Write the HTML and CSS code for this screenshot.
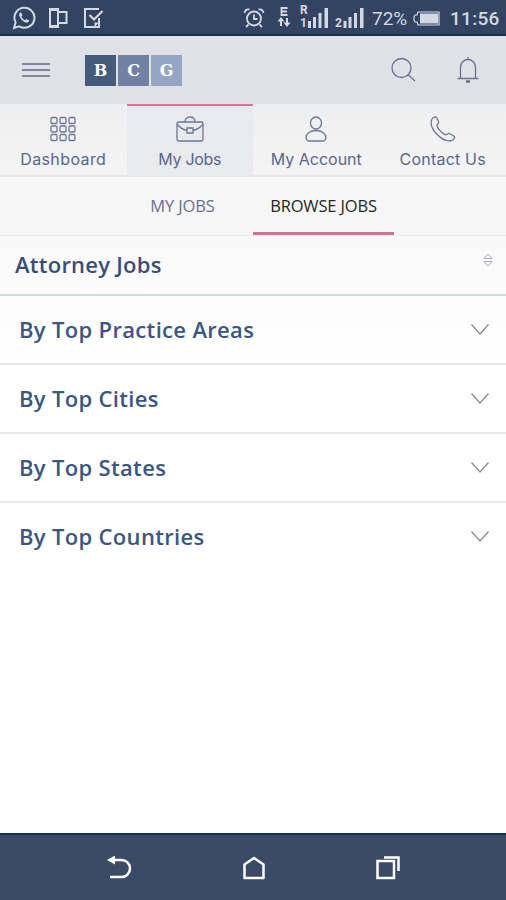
FILE: index.html
```html
<!DOCTYPE html>
<html lang="en">
<head>
  <meta charset="UTF-8">
  <meta name="viewport" content="width=device-width, initial-scale=1.0">
  <title>BCG - Browse Jobs</title>
  <link rel="stylesheet" href="styles.css">
</head>
<body>

<div class="statusbar">
  <div class="status-left">
    <svg class="whatsapp" width="24" height="24" viewBox="0 0 24 24">
      <path d="M2 22l1.600-5.600A10 10 0 1 1 7.300 20.300z" fill="none" stroke="currentColor" stroke-width="2"/>
      <path d="M8.200 6.500c-1.300 1-1.300 2.600-.2 4.700 1.500 2.900 3.700 4.800 6.100 5.400 1.500.3 2.900-.8 3-2.200l-2.700-1.500-1.300 1.300c-1.800-.7-3-2-3.700-3.500l1-1.300-1-2.700z" fill="currentColor"/>
    </svg>
    <svg class="phones" width="21" height="22" viewBox="0 0 21 22">
      <path d="M2 2h8v18H2zM10 5h8.500v11H10" fill="none" stroke="currentColor" stroke-width="2"/>
      <path d="M2 3h8M2 19h8" stroke="currentColor" stroke-width="2"/>
    </svg>
    <svg class="note" width="21" height="22" viewBox="0 0 21 22">
      <path d="M16 11v9H2V2h14" fill="none" stroke="currentColor" stroke-width="2"/>
      <path d="M6.500 8l4.500 4.500L19.500 4" fill="none" stroke="currentColor" stroke-width="2.200"/>
      <path d="M11.500 20v-4.500H16z" fill="currentColor"/>
    </svg>
  </div>
  <div class="status-right">
    <svg class="alarm" width="22" height="22" viewBox="0 0 22 22">
      <g fill="none" stroke="currentColor" stroke-width="1.800">
        <circle cx="11" cy="11.500" r="7"/>
        <path d="M11 7.500V12h3.500M5.500 17.500L3 20M16.500 17.500L19 20M1.500 6C2 3.500 4 2 6.500 2.500M20.500 6C20 3.500 18 2 15.500 2.500"/>
      </g>
    </svg>
    <svg class="edge" width="14" height="24" viewBox="0 0 14 24">
      <path d="M10.500 3H4.500v7h6M4.500 6.500H10" fill="none" stroke="currentColor" stroke-width="1.800"/>
      <path d="M4 21v-6M10 13v6" stroke="currentColor" stroke-width="2"/>
      <path d="M4 12L.5 16.500h7zM10 22l-3.500-4.500h7z" fill="currentColor"/>
    </svg>
    <svg class="signal" width="31" height="30" viewBox="0 0 31 30">
      <text x="1" y="13" class="sim">R</text>
      <text x="1" y="26" class="sim">1</text>
      <path d="M9 20h3v7H9zM14 16h3v11h-3zM19.500 12h3v15h-3zM25.500 7h3.500v20h-3.500z" fill="currentColor"/>
    </svg>
    <svg class="signal second" width="31" height="30" viewBox="0 0 31 30">
      <text x="1" y="26" class="sim">2</text>
      <path d="M9.500 20h3v7h-3zM14.500 16h3v11h-3zM20 12h3v15h-3zM26 7h3.500v20H26z" fill="currentColor"/>
    </svg>
    <span class="percent">72%</span>
    <svg class="battery" width="27" height="15" viewBox="0 0 27 15">
      <path d="M5 1h21v13H5l-1-3H2L1 9V6l1-2h2z" fill="none" stroke="currentColor" stroke-width="1.200"/>
      <path d="M7 2.500h18v10H7z" fill="currentColor"/>
    </svg>
    <span class="clock">11:56</span>
  </div>
</div>

<header>
  <div class="brand">
    <div class="menu"><span></span><span></span><span></span></div>
    <div class="logo"><span>B</span><span>C</span><span>G</span></div>
  </div>
  <div class="actions">
    <svg width="26" height="26" viewBox="0 0 26 26">
      <circle cx="10.500" cy="11" r="9.500" /><path d="M17 17.500L24 24"/>
    </svg>
    <svg width="24" height="28" viewBox="0 0 24 28">
      <path d="M4.500 22V11a7.500 7.500 0 0 1 15 0v11M1.500 22.500h21M12 1v3"/>
      <path d="M10 25.500h4" class="clapper"/>
    </svg>
  </div>
</header>

<nav class="tabs">
  <a class="tab">
    <svg width="26" height="26" viewBox="0 0 26 26">
      <rect x="1" y="1.500" width="6" height="6" rx="1.200"/><rect x="10" y="1.500" width="6" height="6" rx="1.200"/><rect x="19" y="1.500" width="6" height="6" rx="1.200"/>
      <rect x="1" y="10" width="6" height="6" rx="1.200"/><rect x="10" y="10" width="6" height="6" rx="1.200"/><rect x="19" y="10" width="6" height="6" rx="1.200"/>
      <rect x="1" y="18.500" width="6" height="6" rx="1.200"/><rect x="10" y="18.500" width="6" height="6" rx="1.200"/><rect x="19" y="18.500" width="6" height="6" rx="1.200"/>
    </svg>
    <span class="dashboard">Dashboard</span>
  </a>
  <a class="tab active">
    <svg width="28" height="26" viewBox="0 0 28 26">
      <rect x="1" y="6" width="26" height="19" rx="1.500"/>
      <path d="M9 6c0-3 1.500-5 5-5s5 2 5 5M1 8c3 4 6 5.500 10 6.500M27 8c-3 4-6 5.500-10 6.500M11 12h6v5h-6z"/>
    </svg>
    <span class="jobs">My Jobs</span>
  </a>
  <a class="tab">
    <svg width="22" height="26" viewBox="0 0 22 26">
      <ellipse cx="11" cy="7" rx="5.500" ry="6"/>
      <path d="M11 14.500c-6 0-10 3.500-10 7C1 24 3 25 5 25h12c2 0 4-1 4-3.500 0-3.500-4-7-10-7z"/>
    </svg>
    <span>My Account</span>
  </a>
  <a class="tab">
    <svg width="26" height="26" viewBox="0 0 26 26">
      <path d="M2 3c1-1.800 3.800-2.800 4.800-1.200L8.500 5.500C9.300 8 6.500 8 7 10c1.500 3.500 5 7 8.500 8.800 1.800.5 2-2 4-1.300l4.300 2.500c1.700 1.200.2 3.800-2 4.500C12 27-2 12 2 3z"/>
    </svg>
    <span class="contact">Contact Us</span>
  </a>
</nav>

<nav class="subtabs">
  <a>MY JOBS</a>
  <a class="active">BROWSE JOBS</a>
</nav>

<main>
  <div class="title">
    <h1>Attorney Jobs</h1>
    <svg width="10" height="14" viewBox="0 0 10 14"><path d="M1 5.500L5 1l4 4.500zM1 8.500L5 13l4-4.500z"/></svg>
  </div>
  <ul class="list">
    <li><span>By Top Practice Areas</span><svg width="18" height="11" viewBox="0 0 18 11"><path d="M.5.5L9 10 17.500.5"/></svg></li>
    <li><span>By Top Cities</span><svg width="18" height="11" viewBox="0 0 18 11"><path d="M.5.5L9 10 17.500.5"/></svg></li>
    <li><span>By Top States</span><svg width="18" height="11" viewBox="0 0 18 11"><path d="M.5.5L9 10 17.500.5"/></svg></li>
    <li><span>By Top Countries</span><svg width="18" height="11" viewBox="0 0 18 11"><path d="M.5.5L9 10 17.500.5"/></svg></li>
  </ul>
</main>

<footer>
  <svg width="26" height="24" viewBox="0 0 26 24">
    <path d="M5 4h10.500a8.500 8.500 0 0 1 0 17H4" fill="none" stroke="#fff" stroke-width="2.500"/>
    <path d="M1 4l8-4.500v9z" fill="#fff"/>
  </svg>
  <svg width="22" height="24" viewBox="0 0 22 24">
    <path d="M1.500 8.500L11 2l9.500 6.500V22h-19z" fill="none" stroke="#fff" stroke-width="2.500" stroke-linejoin="round"/>
  </svg>
  <svg width="24" height="24" viewBox="0 0 24 24">
    <path d="M1.500 5H18v17H1.500zM8 1.500h14.500V15" fill="none" stroke="#fff" stroke-width="2.500"/>
  </svg>
</footer>

</body>
</html>
```
FILE: styles.css
```css
* {
  box-sizing: border-box;
}
body {
  font-family: "Open Sans", "Noto Sans", sans-serif;
  background: #fff;
  color: #3a4d78;
  margin: 0;
  min-height: 900px;
  display: flex;
  flex-direction: column;
}
svg {
  display: block;
  flex-shrink: 0;
}

/* status bar */
.statusbar {
  height: 36px;
  background: #334463;
  border-bottom: 2px solid #172c50;
  color: #d3d9e4;
  display: flex;
  justify-content: space-between;
  padding: 0 7px 0 12px;
  font-family: Roboto, sans-serif;
}
.status-left, .status-right {
  display: flex;
  align-items: center;
}
.status-left {
  padding-top: 2px;
}
.phones {
  margin-left: 12px;
}
.note {
  margin-left: 14px;
}
.alarm {
  margin-top: 2px;
}
.edge {
  margin-left: 12px;
}
.signal {
  margin: -3px 0 0 8px;
}
.signal.second {
  margin-left: 4px;
}
.sim {
  font: bold 12px Roboto, sans-serif;
  fill: currentColor;
}
.percent {
  font-size: 19px;
  width: 37px;
  margin: 3px 0 0 7px;
}
.battery {
  margin: 2px 0 0 4px;
}
.clock {
  font-size: 19px;
  font-weight: 500;
  letter-spacing: 0.3px;
  width: 49px;
  margin: 3px 0 0 10px;
}

/* header */
header {
  height: 68px;
  background: #dfe1e6;
  display: flex;
  justify-content: space-between;
  align-items: center;
  padding: 0 26px 0 22px;
}
.brand, .actions {
  display: flex;
  align-items: center;
}
.brand {
  gap: 35px;
}
.menu {
  width: 28px;
  display: flex;
  flex-direction: column;
  gap: 4px;
}
.menu span {
  height: 2px;
  background: #85859d;
}
.logo {
  display: flex;
  gap: 2px;
}
.logo span {
  width: 31px;
  height: 31px;
  line-height: 32px;
  background: #445b7c;
  color: #fff;
  font-family: "DejaVu Serif", serif;
  font-size: 16px;
  font-weight: bold;
  text-align: center;
}
.logo span:nth-child(2) {
  background: #7181a3;
}
.logo span:nth-child(3) {
  background: #95a5c4;
}
.actions {
  gap: 39px;
}
.actions svg {
  fill: none;
  stroke: #6c6f91;
  stroke-width: 1.3;
}
.actions .clapper {
  stroke-width: 2.5;
}

/* main tabs */
.tabs {
  height: 73px;
  background: linear-gradient(#eeeff0, #f4f4f5);
  border-bottom: 2px solid #e8e9eb;
  display: flex;
}
.tab {
  flex: 1;
  display: flex;
  flex-direction: column;
  align-items: center;
  padding-top: 10px;
  border-top: 2px solid transparent;
  font-family: Inter, sans-serif;
  font-size: 16px;
  line-height: 20px;
  white-space: nowrap;
  color: #5a668b;
}
.tab svg {
  fill: none;
  stroke: #6d7894;
  stroke-width: 1.3;
  margin-bottom: 7px;
}
.tab .dashboard {
  letter-spacing: 0.4px;
}
.tab .jobs {
  letter-spacing: -0.3px;
}
.tab .contact {
  letter-spacing: 0.2px;
}
.tab.active {
  background: #e9eaee;
  border-top-color: #d47a94;
}

/* sub tabs */
.subtabs {
  height: 59px;
  background: #f6f6f6;
  border-bottom: 1px solid #ebebec;
  display: flex;
  justify-content: center;
  font-size: 16.5px;
  letter-spacing: -0.15px;
}
.subtabs a {
  width: 141px;
  line-height: 58px;
  text-align: center;
  color: #6b7189;
}
.subtabs a.active {
  color: #26262a;
  border-bottom: 3px solid #d5718e;
}

/* list */
main {
  flex: 1;
}
.title {
  height: 60px;
  background: linear-gradient(#f8f8f8, #fcfcfc);
  border-bottom: 2px solid #d5dcdf;
  display: flex;
  justify-content: space-between;
  align-items: center;
  padding: 0 13px 0 15px;
}
.title h1 {
  margin: 0 0 2px;
  font-size: 22px;
  font-weight: 600;
  letter-spacing: 0.25px;
}
.title svg {
  fill: none;
  stroke: #aaa8c4;
  margin-bottom: 11px;
}
.list {
  list-style: none;
  margin: 0;
  padding: 0;
}
.list li {
  height: 69px;
  display: flex;
  justify-content: space-between;
  align-items: center;
  padding: 0 17px 0 19px;
  font-size: 22px;
  font-weight: 600;
  letter-spacing: 0.33px;
  color: #3b5680;
  border-bottom: 2px solid #e4e8e9;
}
.list li:first-child {
  background: linear-gradient(#fcfcfc, #fff);
}
.list li:last-child {
  border-bottom-color: transparent;
}
.list span {
  margin-bottom: 2px;
}
.list svg {
  fill: none;
  stroke: #85888c;
  stroke-width: 1.2;
}

/* android buttons */
footer {
  height: 67px;
  background: #3b4a66;
  border-top: 2px solid #173353;
  display: flex;
  justify-content: space-between;
  align-items: center;
  padding: 0 106px;
}
```
